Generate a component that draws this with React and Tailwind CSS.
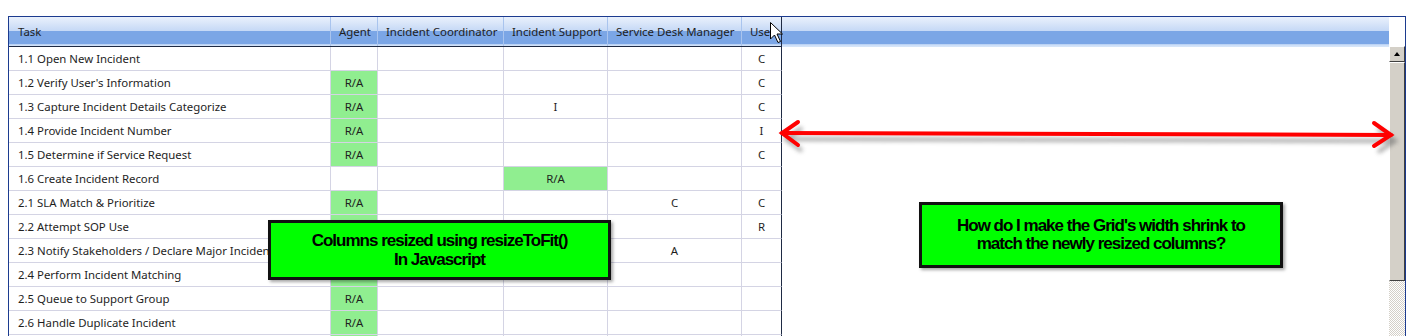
const columns = [
  { name: "Task", w: "w-[322px]" },
  { name: "Agent", w: "w-[47px]" },
  { name: "Incident Coordinator", w: "w-[126px]" },
  { name: "Incident Support", w: "w-[104px]" },
  { name: "Service Desk Manager", w: "w-[134px]" },
  { name: "User", w: "w-[40px]" },
];

// "*" marks a green cell whose text sits under a callout
const rows = [
  ["1.1 Open New Incident", "", "", "", "", "C"],
  ["1.2 Verify User's Information", "R/A", "", "", "", "C"],
  ["1.3 Capture Incident Details Categorize", "R/A", "", "I", "", "C"],
  ["1.4 Provide Incident Number", "R/A", "", "", "", "I"],
  ["1.5 Determine if Service Request", "R/A", "", "", "", "C"],
  ["1.6 Create Incident Record", "", "", "R/A", "", ""],
  ["2.1 SLA Match & Prioritize", "R/A", "", "", "C", "C"],
  ["2.2 Attempt SOP Use", "*", "", "", "", "R"],
  ["2.3 Notify Stakeholders / Declare Major Incident", "*", "", "", "A", ""],
  ["2.4 Perform Incident Matching", "*", "", "", "", ""],
  ["2.5 Queue to Support Group", "R/A", "", "", "", ""],
  ["2.6 Handle Duplicate Incident", "R/A", "", "", "", ""],
  ["", "*", "", "", "", ""],
];

const HeaderCell = ({ col, last }) => (
  <div
    className={`${col.w} h-full flex items-center pl-2 border-r truncate ${
      last ? "border-[#1e2a44]" : "border-[#a9c4ee]"
    }`}
  >
    <span className={col.name === "Task" ? "pl-[1px]" : "pl-0"}>{col.name}</span>
  </div>
);

const Row = ({ row }) => (
  <div className="flex h-6">
    {row.map((v, i) => {
      const last = i === row.length - 1;
      const green = v === "R/A" || v === "*";
      return (
        <div
          key={i}
          className={`${columns[i].w} flex items-center border-b border-r ${
            i === 0 ? "pl-[9px] justify-start" : "justify-center"
          } ${last ? "border-r-[#1e2a44] border-b-[#d4d4e4]" : "border-[#d4d4e4]"} ${
            green ? "bg-[#90ee90]" : "bg-white"
          }`}
        >
          <span className="whitespace-nowrap">{v === "*" ? "" : v}</span>
        </div>
      );
    })}
  </div>
);

const Overlay = () => (
  <svg className="absolute inset-0 pointer-events-none" width="1419" height="336">
    <defs>
      <filter id="blur" x="-10%" y="-50%" width="120%" height="200%">
        <feGaussianBlur stdDeviation="2" />
      </filter>
    </defs>
    {/* arrow shadow */}
    <g transform="translate(4 6)" stroke="#666" strokeWidth="4" fill="none" opacity="0.55" filter="url(#blur)">
      <path d="M782 133 L1391 135" />
      <path d="M798 122 L782 133 L798 145" />
      <path d="M1374 123 L1391 135 L1374 146" />
    </g>
    {/* red arrow */}
    <g stroke="#ff0000" strokeWidth="4" fill="none" strokeLinecap="round" strokeLinejoin="miter">
      <path d="M782 133 L1391 135" />
      <path d="M798 122 L782 133 L798 145" />
      <path d="M1374 123 L1391 135 L1374 146" />
    </g>
    {/* mouse cursor */}
    <path
      d="M770.5 22.5 L770.5 39 L774.5 35 L778 42.5 L780.5 41.5 L777 34 L782.5 34 Z"
      fill="#fff"
      stroke="#000"
      strokeWidth="1"
    />
  </svg>
);

export default function App() {
  return (
    <div className="relative w-[1419px] h-[336px] overflow-hidden bg-white font-['Noto_Sans',sans-serif] text-[11.4px] text-[#1e1e1e]">
      <div className="ml-2 mt-4 w-[1398px] h-[320px] flex border-l border-t border-r border-[#1c3b8f]">
        {/* grid area */}
        <div className="flex-1 flex flex-col">
          <div className="flex h-[30px] bg-[linear-gradient(to_bottom,#eaf1fc_0%,#c6d9f6_45%,#7ba6e6_47%,#7ba6e6_90%,#c9dcf7_92%,#d8e6f9_100%)]">
            <div className="flex border-b border-[#1e2a44]">
              {columns.map((c, i) => (
                <HeaderCell key={c.name} col={c} last={i === columns.length - 1} />
              ))}
            </div>
            <div className="flex-1" />
          </div>
          <div className="flex-1 overflow-hidden">
            {rows.map((r, i) => (
              <Row key={i} row={r} />
            ))}
          </div>
        </div>

        {/* scrollbar */}
        <div className="w-4 flex flex-col">
          <div className="h-[29px] bg-white" />
          <div className="h-[16px] bg-[#d4d0c8] border-t border-l border-t-white border-l-white border-b border-r border-b-[#404040] border-r-[#404040] flex items-center justify-center">
            <div className="w-0 h-0 border-l-[3px] border-r-[3px] border-b-[4px] border-l-transparent border-r-transparent border-b-black" />
          </div>
          <div className="h-[219px] bg-[#d4d0c8] border-t border-l border-t-white border-l-white border-b border-r border-b-[#404040] border-r-[#404040]" />
          <div className="flex-1 bg-[repeating-conic-gradient(#ffffff_0%_25%,#d4d0c8_0%_50%)] bg-[length:2px_2px]" />
        </div>
      </div>

      <Overlay />

      {/* callouts */}
      <div className="absolute left-[268px] top-[220px] w-[343px] h-[60px] bg-[#00ff00] border-[3px] border-[#111] shadow-[2px_2px_3px_rgba(0,0,0,0.35)] flex flex-col items-center justify-center font-['Liberation_Sans',Arial,sans-serif] font-bold text-[17px] leading-[19px] tracking-[-1px] text-black">
        <span>Columns resized using resizeToFit()</span>
        <span>In Javascript</span>
      </div>
      <div className="absolute left-[919px] top-[202px] w-[364px] h-[66px] bg-[#00ff00] border-[3px] border-[#111] shadow-[2px_2px_3px_rgba(0,0,0,0.35)] flex flex-col items-center justify-center font-['Liberation_Sans',Arial,sans-serif] font-bold text-[17px] leading-[18px] tracking-[-1px] text-black">
        <span>How do I make the Grid's width shrink to</span>
        <span>match the newly resized columns?</span>
      </div>
    </div>
  );
}
